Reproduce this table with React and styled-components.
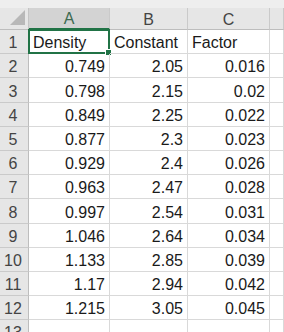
import React from 'react';
import styled, { createGlobalStyle } from 'styled-components';

const GlobalStyle = createGlobalStyle`
    html, body {
        margin: 0;
        padding: 0;
        background: #ffffff;
        overflow: hidden;
    }
`;

const Sheet = styled.div`
    display: grid;
    grid-template-columns: 29px 81px 78px 82px 1fr;
    grid-template-rows: 8px 22px repeat(13, 24.2px);
    width: 284px;
    height: 332px;
    overflow: hidden;
    font-family: "Liberation Sans", Arial, sans-serif;
    font-size: 16px;
    color: #1a1a1a;
`;

const TopStrip = styled.div`
    grid-column: 1 / -1;
    background: #eeeeee;
`;

const Corner = styled.div`
    background: #e6e6e6;
    border-right: 1px solid #c4c4c4;
    border-bottom: 1px solid #bdbdbd;
    box-sizing: border-box;
    position: relative;
    svg {
        position: absolute;
        right: 3px;
        bottom: 4px;
    }
`;

const ColHead = styled.div`
    display: flex;
    align-items: center;
    justify-content: center;
    box-sizing: border-box;
    background: ${({ active }) => (active ? '#d3d3d3' : '#e6e6e6')};
    color: ${({ active }) => (active ? '#3d6a50' : '#444')};
    border-right: 1px solid #cacaca;
    border-bottom: ${({ active }) => (active ? '2px solid #217346' : '1px solid #bdbdbd')};
    padding-top: 2px;
`;

const RowHead = styled.div`
    display: flex;
    align-items: flex-end;
    justify-content: center;
    box-sizing: border-box;
    padding: 0 2px 1px 0;
    background: #e6e6e6;
    color: #444;
    border-right: 1px solid #bdbdbd;
    border-bottom: 1px solid #cacaca;
`;

const Cell = styled.div`
    display: flex;
    align-items: flex-end;
    justify-content: ${({ num }) => (num ? 'flex-end' : 'flex-start')};
    box-sizing: border-box;
    padding: 0 4px 1px 4px;
    border-right: 1px solid #d9d9d9;
    border-bottom: 1px solid #d9d9d9;
    white-space: nowrap;
    position: relative;
`;

const Selection = styled.div`
    position: absolute;
    left: -1px;
    top: -1px;
    right: -1px;
    bottom: -1px;
    border: 2px solid #217346;
    pointer-events: none;
`;

const Handle = styled.div`
    position: absolute;
    right: -4px;
    bottom: -4px;
    width: 5px;
    height: 5px;
    background: #217346;
    border: 1px solid #ffffff;
`;

const headers = ['Density', 'Constant', 'Factor'];

const rows = [
    ['0.749', '2.05', '0.016'],
    ['0.798', '2.15', '0.02'],
    ['0.849', '2.25', '0.022'],
    ['0.877', '2.3', '0.023'],
    ['0.929', '2.4', '0.026'],
    ['0.963', '2.47', '0.028'],
    ['0.997', '2.54', '0.031'],
    ['1.046', '2.64', '0.034'],
    ['1.133', '2.85', '0.039'],
    ['1.17', '2.94', '0.042'],
    ['1.215', '3.05', '0.045'],
];

const App = () => {
    return (
        <>
            <GlobalStyle />
            <Sheet>
                <TopStrip />
                <Corner>
                    <svg width="15" height="15" viewBox="0 0 15 15">
                        <polygon points="15,0 15,15 0,15" fill="#b8b8b8" />
                    </svg>
                </Corner>
                <ColHead active>A</ColHead>
                <ColHead>B</ColHead>
                <ColHead>C</ColHead>
                <ColHead />

                <RowHead>1</RowHead>
                <Cell>
                    {headers[0]}
                    <Selection>
                        <Handle />
                    </Selection>
                </Cell>
                <Cell>{headers[1]}</Cell>
                <Cell>{headers[2]}</Cell>
                <Cell />

                {rows.map((r, i) => (
                    <React.Fragment key={i}>
                        <RowHead>{i + 2}</RowHead>
                        <Cell num>{r[0]}</Cell>
                        <Cell num>{r[1]}</Cell>
                        <Cell num>{r[2]}</Cell>
                        <Cell />
                    </React.Fragment>
                ))}

                <RowHead>13</RowHead>
                <Cell />
                <Cell />
                <Cell />
                <Cell />
            </Sheet>
        </>
    );
};

export default App;
